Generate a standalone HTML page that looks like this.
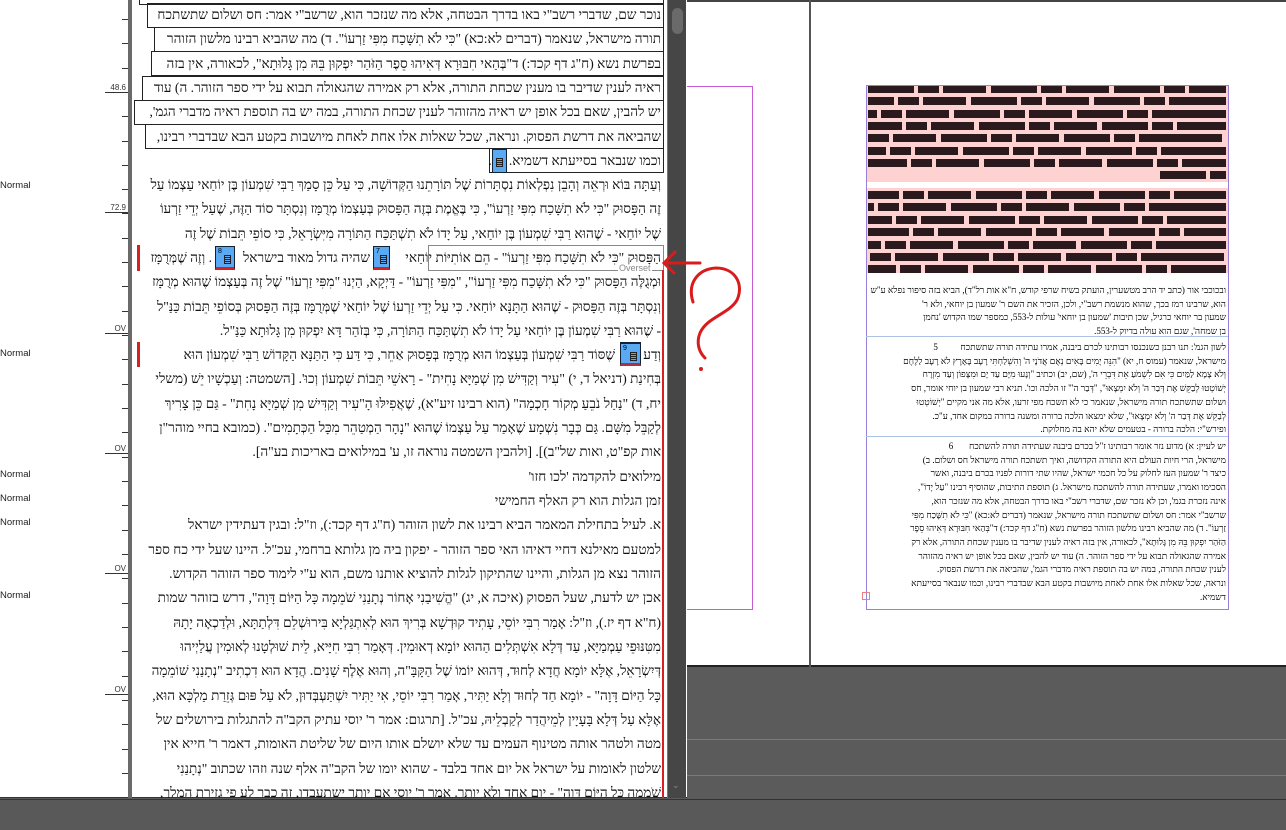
<!DOCTYPE html>
<html><head><meta charset="utf-8">
<style>
*{margin:0;padding:0;box-sizing:border-box}
body{width:1286px;height:830px;overflow:hidden;background:#5b5b5b;position:relative;font-family:"Liberation Serif",serif}
.a{position:absolute}
.row{position:absolute;left:138px;width:523px;height:24px;line-height:24px;font-size:13.6px;direction:rtl;text-align:right;white-space:nowrap;overflow:hidden;color:#111}
.box{position:absolute;border:1px solid #222;height:25px}
.tick{position:absolute;left:122px;width:6px;height:1px;background:#333}
.lbl{position:absolute;left:0;font:9.5px "Liberation Sans",sans-serif;color:#222}
.dep{position:absolute;left:105px;width:23px;border-bottom:1px solid #333;font:8px "Liberation Sans",sans-serif;color:#333;text-align:right;padding-right:2px;line-height:9px}
.ic{position:absolute;background:#5aa9f5;border:1px solid #123;width:17px;height:24px;font:7px "Liberation Sans",sans-serif;color:#000}
.ic b{position:absolute;left:6px;top:8px;width:7px;height:9px;border:1px solid #222;background:repeating-linear-gradient(#5aa9f5 0 1px,#222 1px 2px)}
.ic i{position:absolute;left:2px;top:1px;font-style:normal}
.rb{position:absolute;left:137px;width:3px;background:#d82020}
.st{position:absolute;left:870px;width:356px;direction:rtl;text-align:right;font-size:9px;line-height:13.7px;color:#000;white-space:nowrap;overflow:hidden}
.blk{position:absolute;height:8px;background:repeating-linear-gradient(90deg,#2a1a1e 0 46px,#ffd2d2 46px 50px,#2a1a1e 50px 71px,#ffd2d2 71px 75px,#2a1a1e 75px 118px,#ffd2d2 118px 123px)}
</style></head><body>
<div class="a" style="left:0;top:0;width:687px;height:798px;background:#fff;border-bottom:1px solid #333"></div>
<div class="a" style="left:128px;top:0;width:4px;height:798px;background:#6a6a6a"></div>
<div class="a" style="left:667px;top:0;width:19px;height:798px;background:#464646;border-left:1px solid #777"></div>
<div class="a" style="left:672px;top:8px;width:11px;height:26px;background:#6a6a6a;border-radius:6px"></div>
<div class="a" style="left:672px;top:780px;width:11px;height:8px;color:#888;font:9px sans-serif">⌄</div>
<div class="a" style="left:687px;top:0;width:599px;height:667px;background:#fff;border-top:2px solid #444;border-bottom:2px solid #222"></div>
<div class="a" style="left:809px;top:0;width:2px;height:667px;background:#555"></div>
<div class="a" style="left:687px;top:86px;width:66px;height:524px;border:1px solid #c85ad8;border-left:none"></div>
<div class="a" style="left:687px;top:739px;width:599px;height:1px;background:#7a7a7a"></div>
<div class="a" style="left:687px;top:775px;width:599px;height:1px;background:#7a7a7a"></div>
<div class="a" style="left:0;top:799px;width:1286px;height:31px;background:#595959;border-top:1px solid #333"></div>

<div class="tick" style="top:19px"></div><div class="tick" style="top:43px"></div><div class="tick" style="top:68px"></div><div class="tick" style="top:92px"></div><div class="tick" style="top:116px"></div><div class="tick" style="top:141px"></div><div class="tick" style="top:165px"></div><div class="tick" style="top:189px"></div><div class="tick" style="top:213px"></div><div class="tick" style="top:238px"></div><div class="tick" style="top:262px"></div><div class="tick" style="top:286px"></div><div class="tick" style="top:311px"></div><div class="tick" style="top:335px"></div><div class="tick" style="top:359px"></div><div class="tick" style="top:384px"></div><div class="tick" style="top:408px"></div><div class="tick" style="top:432px"></div><div class="tick" style="top:457px"></div><div class="tick" style="top:481px"></div><div class="tick" style="top:505px"></div><div class="tick" style="top:530px"></div><div class="tick" style="top:554px"></div><div class="tick" style="top:578px"></div><div class="tick" style="top:603px"></div><div class="tick" style="top:627px"></div><div class="tick" style="top:651px"></div><div class="tick" style="top:676px"></div><div class="tick" style="top:700px"></div><div class="tick" style="top:724px"></div><div class="tick" style="top:749px"></div><div class="tick" style="top:773px"></div><div class="tick" style="top:797px"></div>
<div class="dep" style="top:83px">48.6</div>
<div class="dep" style="top:203px">72.9</div>
<div class="dep" style="top:324px">OV</div>
<div class="dep" style="top:444px">OV</div>
<div class="dep" style="top:564px">OV</div>
<div class="dep" style="top:685px">OV</div>
<div class="lbl" style="top:180px">Normal</div>
<div class="lbl" style="top:348px">Normal</div>
<div class="lbl" style="top:469px">Normal</div>
<div class="lbl" style="top:493px">Normal</div>
<div class="lbl" style="top:517px">Normal</div>
<div class="lbl" style="top:590px">Normal</div>

<div class="box" style="left:139px;top:-20px;width:525px"></div>
<div class="box" style="left:147px;top:3px;width:517px"></div>
<div class="box" style="left:154px;top:27px;width:510px"></div>
<div class="box" style="left:151px;top:51px;width:513px"></div>
<div class="box" style="left:142px;top:76px;width:522px"></div>
<div class="box" style="left:134px;top:100px;width:530px"></div>
<div class="box" style="left:145px;top:124px;width:519px"></div>
<div class="box" style="left:489px;top:148px;width:175px"></div>
<div class="a" style="left:428px;top:245px;width:236px;height:26px;border:1px solid #888"></div>
<div class="a" style="left:618px;top:263px;font:9px 'Liberation Sans',sans-serif;color:#888;background:#fff;padding:0 1px">Overset</div>
<div class="a" style="left:662px;top:270px;width:2px;height:528px;background:#d82020"></div>
<div class="rb" style="top:245px;height:26px"></div>
<div class="rb" style="top:342px;height:25px"></div>

<div class="row" style="top:3px">נוכר שם, שדברי רשב"י באו בדרך הבטחה, אלא מה שנזכר הוא, שרשב"י אמר: חס ושלום שתשתכח</div>
<div class="row" style="top:27px">תורה מישראל, שנאמר (דברים לא:כא) "כִּי לֹא תִשָּׁכַח מִפִּי זַרְעוֹ". ד) מה שהביא רבינו מלשון הזוהר</div>
<div class="row" style="top:52px">בפרשת נשא (ח"ג דף קכד:) ד"בְּהַאי חִבּוּרָא דְּאִיהוּ סֵפֶר הַזֹּהַר יִפְקוּן בֵּהּ מִן גָּלוּתָא", לכאורה, אין בזה</div>
<div class="row" style="top:76px">ראיה לענין שדיבר בו מענין שכחת התורה, אלא רק אמירה שהגאולה תבוא על ידי ספר הזוהר. ה) עוד</div>
<div class="row" style="top:100px">יש להבין, שאם בכל אופן יש ראיה מהזוהר לענין שכחת התורה, במה יש בה תוספת ראיה  מדברי הגמ',</div>
<div class="row" style="top:125px">שהביאה את דרשת הפסוק. ונראה, שכל שאלות אלו אחת לאחת מיושבות בקטע הבא שבדברי רבינו,</div>
<div class="row" style="top:149px">וכמו שנבאר בסייעתא דשמיא.&nbsp;&nbsp;&nbsp;&nbsp;&nbsp;.</div>
<div class="row" style="top:173px">וְעַתָּה בּוֹא וּרְאֵה וְהָבֵן נִפְלְאוֹת נִסְתָּרוֹת שֶׁל תּוֹרָתֵנוּ הַקְּדוֹשָׁה, כִּי עַל כֵּן סָמַךְ רַבִּי שִׁמְעוֹן בֶּן יוֹחַאי עַצְמוֹ עַל</div>
<div class="row" style="top:197px">זֶה הַפָּסוּק "כִּי לֹא תִשָּׁכַח מִפִּי זַרְעוֹ", כִּי בֶּאֱמֶת בְּזֶה הַפָּסוּק בְּעַצְמוֹ מְרֻמָּז וְנִסְתָּר סוֹד הַזֶּה, שֶׁעַל יְדֵי זַרְעוֹ</div>
<div class="row" style="top:222px">שֶׁל יוֹחַאי - שֶׁהוּא רַבִּי שִׁמְעוֹן בֶּן יוֹחַאי, עַל יָדוֹ לֹא תִשְׁתַּכַּח הַתּוֹרָה מִיִּשְׂרָאֵל, כִּי סוֹפֵי תֵּבוֹת שֶׁל זֶה</div>
<div class="row" style="top:246px;left:390px;width:271px">הַפָּסוּק "כִּי לֹא תִשָּׁכַח מִפִּי זַרְעוֹ" - הֵם אוֹתִיּוֹת יוֹחַאי</div>
<div class="row" style="top:246px;left:236px;width:134px">שהיה גדול מאוד בישראל</div>
<div class="row" style="top:246px;left:140px;width:72px">. וְזֶה שֶׁמְּרֻמָּז</div>
<div class="row" style="top:270px">וּמְגֻלֶּה הַפָּסוּק "כִּי לֹא תִשָּׁכַח מִפִּי זַרְעוֹ", "מִפִּי זַרְעוֹ" - דַּיְקָא, הַיְנוּ "מִפִּי זַרְעוֹ" שֶׁל זֶה בְּעַצְמוֹ שֶׁהוּא מְרֻמָּז</div>
<div class="row" style="top:295px">וְנִסְתָּר בְּזֶה הַפָּסוּק - שֶׁהוּא הַתָּנָּא יוֹחַאי. כִּי עַל יְדֵי זַרְעוֹ שֶׁל יוֹחַאי שֶׁמְּרֻמָּז בְּזֶה הַפָּסוּק בְּסוֹפֵי תֵּבוֹת כַּנַּ"ל</div>
<div class="row" style="top:319px">- שֶׁהוּא רַבִּי שִׁמְעוֹן בֶּן יוֹחַאי עַל יָדוֹ לֹא תִשְׁתַּכַּח הַתּוֹרָה, כִּי  בְּזֹהַר דָּא יִפְקוּן מִן גָּלוּתָא כַּנַּ"ל.</div>
<div class="row" style="top:343px;left:641px;width:20px">וְדַע</div>
<div class="row" style="top:343px;left:150px;width:465px">שֶׁסּוֹד רַבִּי שִׁמְעוֹן בְּעַצְמוֹ הוּא מְרֻמָּז בְּפָסוּק אַחֵר, כִּי דַּע כִּי הַתַּנָּא הַקָּדוֹשׁ רַבִּי שִׁמְעוֹן הוּא</div>
<div class="row" style="top:367px">בְּחִינַת (דניאל ד, י) "עִיר וְקַדִּישׁ מִן שְׁמַיָּא נָחִית" - רָאשֵׁי תֵּבוֹת שִׁמְעוֹן וְכוּ'. [השמטה: וְעַכְשָׁיו יֵשׁ (משלי</div>
<div class="row" style="top:392px">יח, ד) "נַחַל נֹבֵעַ מְקוֹר חָכְמָה" (הוא רבינו זיע"א), שֶׁאֲפִילּוּ הָ"עִיר וְקַדִּישׁ מִן שְׁמַיָּא נָחִת" - גַּם כֵּן צָרִיךְ</div>
<div class="row" style="top:416px">לְקַבֵּל מִשָּׁם. גַּם כְּבָר נִשְׁמָע שֶׁאָמַר עַל עַצְמוֹ שֶׁהוּא "נָהָר הַמְטַהֵר מִכָּל הַכְּתָמִים". (כמובא בחיי מוהר"ן</div>
<div class="row" style="top:440px">אות קפ"ט, ואות של"ב)]. [ולהבין השמטה נוראה זו, ע' במילואים באריכות בע"ה].</div>
<div class="row" style="top:465px">מילואים להקדמה 'לכו חזו'</div>
<div class="row" style="top:489px">זמן הגלות הוא רק האלף החמישי</div>
<div class="row" style="top:513px">א. לעיל בתחילת המאמר הביא רבינו את לשון הזוהר (ח"ג דף קכד:), וז"ל: ובגין דעתידין ישראל</div>
<div class="row" style="top:538px">למטעם מאילנא דחיי דאיהו האי ספר הזוהר - יפקון ביה מן גלותא ברחמי, עכ"ל. היינו שעל ידי כח ספר</div>
<div class="row" style="top:562px">הזוהר נצא מן הגלות, והיינו שהתיקון לגלות להוציא אותנו משם, הוא ע"י לימוד ספר הזוהר הקדוש.</div>
<div class="row" style="top:586px">אכן יש לדעת, שעל הפסוק (איכה א, יג) "הֱשִׁיבַנִי אָחוֹר נְתָנַנִי שֹׁמֵמָה כָּל הַיּוֹם דָּוָה", דרש בזוהר שמות</div>
<div class="row" style="top:611px">(ח"א דף יז.), וז"ל: אָמַר רִבִּי יוֹסֵי, עָתִיד קוּדְשָׁא בְּרִיךְ הוּא לְאִתְגַּלְיָא בִּירוּשְׁלֵם דִּלְתַתָּא, וּלְדַכְאָה יָתָהּ</div>
<div class="row" style="top:635px">מִטִּנּוּפֵי עַמְמַיָּא, עַד דְּלָא אִשְׁתְּלִים הַהוּא יוֹמָא דְאוּמִין. דְּאָמַר רִבִּי חִיָּיא, לֵית שׁוּלְטָנוּ לְאוּמִין עֲלַיְיהוּ</div>
<div class="row" style="top:659px">דְּיִשְׂרָאֵל, אֶלָּא יוֹמָא חֲדָא לְחוּד, דְּהוּא יוֹמוֹ שֶׁל הַקָּבָּ"ה, וְהוּא אֶלֶף שָׁנִים. הֲדָא הוּא דִכְתִיב "נְתָנַנִי שׁוֹמֵמָה</div>
<div class="row" style="top:684px">כָּל הַיּוֹם דָּוָה" - יוֹמָא חַד לְחוּד וְלָא יַתִּיר, אָמַר רִבִּי יוֹסֵי, אִי יַתִּיר יִשְׁתַּעְבְּדוּן, לֹא עַל פּוּם גְּזֵרַת מַלְכָּא הוּא,</div>
<div class="row" style="top:708px">אֶלָּא עַל דְּלָא בָּעָיָין לְמֵיהֲדַר לְקַבְלֵיהּ, עכ"ל. [תרגום: אמר ר' יוסי עתיק הקב"ה להתגלות בירושלים של</div>
<div class="row" style="top:732px">מטה ולטהר אותה מטינוף העמים עד שלא יושלם אותו היום של שליטת האומות, דאמר ר' חייא אין</div>
<div class="row" style="top:757px">שלטון לאומות על ישראל אל יום אחד בלבד - שהוא יומו של הקב"ה אלף שנה וזהו שכתוב "נְתָנַנִי</div>
<div class="row" style="top:781px;height:17px">שֹׁמֵמָה כָּל הַיּוֹם דָּוָה" - יום אחד ולא יותר. אמר ר' יוסי אם יותר ישתעבדו, זה כבר לע פי גזירת המלך,</div>

<div class="ic" style="left:492px;top:149px;width:15px"><b style="left:3px"></b></div>
<div class="ic" style="left:373px;top:246px;border-bottom:3px solid #d82020"><i>7</i><b></b></div>
<div class="ic" style="left:215px;top:246px;width:20px;border-bottom:3px solid #d82020"><i>8</i><b style="left:8px"></b></div>
<div class="ic" style="left:620px;top:342px;width:21px;border-top:2px solid #123;border-bottom:3px solid #b03040"><i>9</i><b style="left:9px"></b></div>

<svg class="a" style="left:0;top:0" width="1286" height="830">
<g fill="none" stroke="#d81c1c" stroke-width="3" stroke-linecap="round">
<path d="M700 263 L665 263"/>
<path d="M675 252 L664 263 L674 273"/>
<path d="M693 302 C687 283 698 269 716 268 C736 268 744 285 737 300 C729 314 707 317 700 333 C696 343 699 352 705 358"/>
</g>
<circle cx="701" cy="369" r="2" fill="#d81c1c"/>
</svg>

<div class="a" style="left:866px;top:85px;width:362px;height:97px;background:#ffd2d2"></div>
<div class="a" style="left:866px;top:188px;width:362px;height:85px;background:#ffd2d2"></div>
<div class="blk" style="left:868px;top:85px;width:358px"></div>
<div class="blk" style="left:868px;top:97px;width:358px;background-position:-20px 0"></div>
<div class="blk" style="left:868px;top:110px;width:358px;background-position:-37px 0"></div>
<div class="blk" style="left:868px;top:122px;width:358px;background-position:-12px 0"></div>
<div class="blk" style="left:868px;top:134px;width:358px;background-position:-50px 0"></div>
<div class="blk" style="left:868px;top:147px;width:358px;background-position:-28px 0"></div>
<div class="blk" style="left:868px;top:159px;width:358px;background-position:-7px 0"></div>
<div class="blk" style="left:1160px;top:171px;width:66px"></div>
<div class="blk" style="left:868px;top:191px;width:358px;background-position:-15px 0"></div>
<div class="blk" style="left:868px;top:203px;width:358px;background-position:-40px 0"></div>
<div class="blk" style="left:868px;top:216px;width:358px;background-position:-22px 0"></div>
<div class="blk" style="left:868px;top:228px;width:358px;background-position:-5px 0"></div>
<div class="blk" style="left:868px;top:241px;width:358px;background-position:-33px 0"></div>
<div class="blk" style="left:868px;top:253px;width:358px;background-position:-48px 0"></div>
<div class="blk" style="left:868px;top:265px;width:358px;background-position:-18px 0"></div>
<div class="a" style="left:866px;top:85px;width:363px;height:525px;border:1px solid #9a7fd8"></div>
<div class="a" style="left:866px;top:336px;width:362px;height:1px;background:#a9c2e6"></div>
<div class="a" style="left:866px;top:436px;width:362px;height:1px;background:#a9c2e6"></div>
<div class="a" style="left:862px;top:592px;width:8px;height:8px;border:1px solid #f08080"></div>

<div class="st" style="top:284px">ובכוכבי אור (כתב יד הרב מטשערין, הועתק בשיח שרפי קודש, ח"א אות רל"ד), הביא בזה סיפור נפלא ע"ש. והעיקר<br>הוא, שרבינו רמז בכך, שהוא מנשמת רשב"י, ולכן, הזכיר את השם ר' שמעון בן יוחאי, ולא ר'<br>שמעון בר יוחאי כרגיל, שכן תיבות 'שמעון בן יוחאי' עולות ל-553, כמספר שמו הקדוש 'נחמן<br>בן שמחה', שגם הוא עולה בדיוק ל-553.</div>
<div class="st" style="top:341px">לשון הגמ': תנו רבנן כשנכנסו רבותינו לכרם ביבנה, אמרו עתידה תורה שתשתכח&nbsp;&nbsp;&nbsp;&nbsp;&nbsp;&nbsp;&nbsp;&nbsp;&nbsp;&nbsp;5<br>מישראל, שנאמר (עמוס ח, יא) "הִנֵּה יָמִים בָּאִים נְאֻם אֲדֹנָי ה' וְהִשְׁלַחְתִּי רָעָב בָּאָרֶץ לֹא רָעָב לַלֶּחֶם<br>וְלֹא צָמָא לַמַּיִם כִּי אִם לִשְׁמֹעַ אֵת דִּבְרֵי ה', (שם, יב) וכתיב "וְנָעוּ מִיָּם עַד יָם וּמִצָּפוֹן וְעַד מִזְרָח<br>יְשׁוֹטְטוּ לְבַקֵּשׁ אֶת דְּבַר ה' וְלֹא יִמְצָאוּ", "דְּבַר ה'" זו הלכה וכו'. תניא רבי שמעון בן יוחי אומר, חס<br>ושלום שתשתכח תורה מישראל, שנאמר כי לא תשכח מפי זרעו, אלא מה אני מקיים "יְשׁוֹטְטוּ<br>לְבַקֵּשׁ אֶת דְּבַר ה' וְלֹא יִמְצָאוּ", שלא ימצאו הלכה ברורה ומשנה ברורה במקום אחד, ע"כ.<br>ופירש"י: הלכה ברורה - בטעמים שלא יהא בה מחלוקת.</div>
<div class="st" style="top:440px">יש לעיין: א) מדוע נזר אומר רבותינו ז"ל בכרם ביבנה שעתידה תורה להשתכח&nbsp;&nbsp;&nbsp;&nbsp;&nbsp;&nbsp;&nbsp;6<br>מישראל, הרי חיות העולם היא התורה הקדושה, ואיך תשתכח תורה מישראל חס ושלום. ב)<br>כיצד ר' שמעון העז לחלוק על כל חכמי ישראל, שהיו שתי דורות לפניו בכרם ביבנה, ואשר<br>הסכימו ואמרו, שעתידה תורה להשתכח מישראל. ג) תוספת התיבות, שהוסיף רבינו "עַל יָדוֹ",<br>אינה נזכרת בגמ', וכן לא נזכר שם, שדברי רשב"י באו בדרך הבטחה, אלא מה שנזכר הוא,<br>שרשב"י אמר: חס ושלום שתשתכח תורה מישראל, שנאמר (דברים לא:כא) "כִּי לֹא תִשָּׁכַח מִפִּי<br>זַרְעוֹ". ד) מה שהביא רבינו מלשון הזוהר בפרשת נשא (ח"ג דף קכד:) ד"בְּהַאי חִבּוּרָא דְּאִיהוּ סֵפֶר<br>הַזֹּהַר יִפְקוּן בֵּהּ מִן גָּלוּתָא", לכאורה, אין בזה ראיה לענין שדיבר בו מענין שכחת התורה, אלא רק<br>אמירה שהגאולה תבוא על ידי ספר הזוהר. ה) עוד יש להבין, שאם בכל אופן יש ראיה מהזוהר<br>לענין שכחת התורה, במה יש בה תוספת ראיה  מדברי הגמ', שהביאה את דרשת הפסוק.<br>ונראה, שכל שאלות אלו אחת לאחת מיושבות בקטע הבא שבדברי רבינו, וכמו שנבאר בסייעתא<br>דשמיא.</div>
</body></html>
